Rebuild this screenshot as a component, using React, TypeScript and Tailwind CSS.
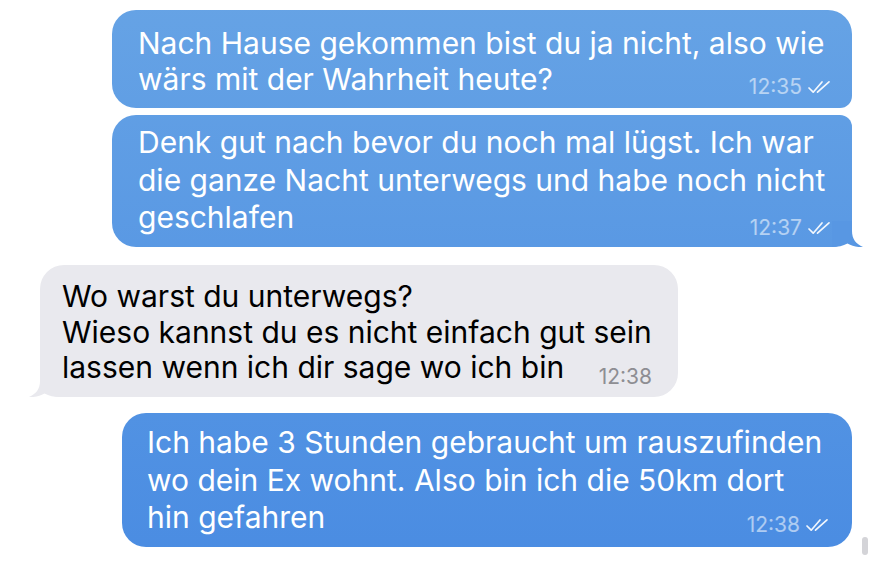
import React from "react";

const BLUE_BG =
  "bg-[linear-gradient(180deg,#66a3e5_0px,#4a8ce2_562px)] bg-fixed";

function Checks() {
  return (
    <svg width="25" height="15" viewBox="0 0 25 15" fill="none" className="shrink-0">
      <path d="M2 8 L6.2 12.2 L15 2" stroke="rgba(255,255,255,0.92)" strokeWidth="1.7" strokeLinecap="round" strokeLinejoin="round" />
      <path d="M10.5 12.2 L22 1.8" stroke="rgba(255,255,255,0.92)" strokeWidth="1.7" strokeLinecap="round" />
    </svg>
  );
}

function TailRight({ color }: { color: string }) {
  return (
    <svg width="32" height="26" viewBox="0 0 32 26" className="absolute right-[-12px] bottom-0">
      <path
        d="M20 0 L20 10 C20 18 24 23 31 26 C25 26.5 20 25 15.5 22.5 C11 25 6 26 0 26 L0 0 Z"
        fill={color}
      />
    </svg>
  );
}

function TailLeft({ color }: { color: string }) {
  return (
    <svg width="32" height="26" viewBox="0 0 32 26" className="absolute left-[-12px] bottom-0">
      <path
        d="M12 0 L12 10 C12 18 8 23 1 26 C7 26.5 12 25 16.5 22.5 C21 25 26 26 32 26 L32 0 Z"
        fill={color}
      />
    </svg>
  );
}

export default function App() {
  const font = { fontFamily: "Inter, 'Noto Sans', sans-serif" };
  return (
    <div className="relative w-[887px] h-[562px] bg-white overflow-hidden" style={font}>
      <div className="flex flex-col pt-[10px]">
        {/* Bubble 1 */}
        <div
          className={`relative self-end mr-[35px] w-[740px] h-[98px] rounded-[24px] rounded-br-[12px] ${BLUE_BG} pl-[26px] pt-[15px] text-white text-[30px] leading-[36px]`}
        >
          <div className="whitespace-nowrap">
            Nach Hause gekommen bist du ja nicht, also wie
            <br />
            wärs mit der Wahrheit heute?
          </div>
          <div className="absolute right-[20px] bottom-[11px] h-[20px] flex items-center gap-[5px]">
            <span className="text-[21px] leading-[20px] text-white/55">12:35</span>
            <Checks />
          </div>
        </div>

        {/* Bubble 2 */}
        <div
          className={`relative mt-[7px] self-end mr-[35px] w-[740px] h-[132px] rounded-[24px] rounded-tr-[12px] rounded-br-[20px] ${BLUE_BG} pl-[26px] pt-[9px] text-white text-[30px] leading-[37.5px]`}
        >
          <TailRight color="#5897e3" />
          <div className="relative whitespace-nowrap">
            Denk gut nach bevor du noch mal lügst. Ich war
            <br />
            die ganze Nacht unterwegs und habe noch nicht
            <br />
            geschlafen
          </div>
          <div className="absolute right-[20px] bottom-[9px] h-[20px] flex items-center gap-[5px]">
            <span className="text-[21px] leading-[20px] text-white/55">12:37</span>
            <Checks />
          </div>
        </div>

        {/* Bubble 3 */}
        <div className="relative mt-[18px] self-start ml-[40px] w-[638px] h-[132px] rounded-[24px] rounded-bl-[20px] bg-[#e9e9ee] pl-[22px] pt-[14px] text-black text-[30px] leading-[35.5px]">
          <TailLeft color="#e9e9ee" />
          <div className="relative whitespace-nowrap">
            Wo warst du unterwegs?
            <br />
            Wieso kannst du es nicht einfach gut sein
            <br />
            lassen wenn ich dir sage wo ich bin
          </div>
          <div className="absolute right-[26px] bottom-[10px] h-[20px] flex items-center">
            <span className="text-[21px] leading-[20px] text-[#8e8e93]">12:38</span>
          </div>
        </div>

        {/* Bubble 4 */}
        <div
          className={`relative mt-[16px] self-end mr-[35px] w-[730px] h-[134px] rounded-[24px] ${BLUE_BG} pl-[25px] pt-[11px] text-white text-[30px] leading-[37.5px]`}
        >
          <div className="whitespace-nowrap">
            Ich habe 3 Stunden gebraucht um rauszufinden
            <br />
            wo dein Ex wohnt. Also bin ich die 50km dort
            <br />
            hin gefahren
          </div>
          <div className="absolute right-[22px] bottom-[12px] h-[20px] flex items-center gap-[5px]">
            <span className="text-[21px] leading-[20px] text-white/55">12:38</span>
            <Checks />
          </div>
        </div>
      </div>

      {/* scroll indicator */}
      <div className="absolute left-[862px] top-[537px] w-[6px] h-[18px] rounded-[3px] bg-[#d4d4d8]" />
    </div>
  );
}
